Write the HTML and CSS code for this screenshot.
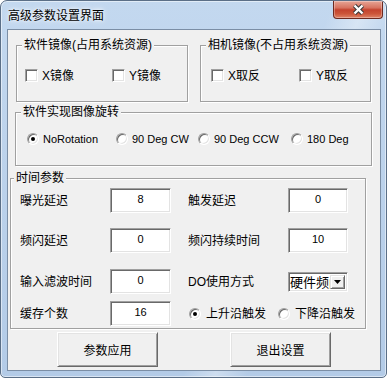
FILE: index.html
```html
<!DOCTYPE html>
<html lang="zh-CN">
<head>
    <meta charset="UTF-8">
    <meta name="viewport" content="width=device-width, initial-scale=1.0">
    <link rel="stylesheet" href="styles.css">
</head>
<body>
    <div class="window">
        <div class="titlebar">
            <span class="title">高级参数设置界面</span>
            <button class="close-btn" type="button">
                <svg width="13" height="11" viewBox="0 0 13 11">
                    <path d="M2.5 1.5 L10.5 9.5 M10.5 1.5 L2.5 9.5" stroke="#3a3a3a" stroke-width="4.4" fill="none"/>
                    <path d="M2.5 1.5 L10.5 9.5 M10.5 1.5 L2.5 9.5" stroke="#ffffff" stroke-width="2.4" fill="none"/>
                </svg>
            </button>
        </div>

        <div class="client">
            <!-- 镜像 -->
            <div class="mirror-row">
                <div class="group soft-mirror">
                    <div class="group-title">软件镜像(占用系统资源)</div>
                    <div class="check-row">
                        <label class="check w87"><span class="box"></span>X镜像</label>
                        <label class="check"><span class="box"></span>Y镜像</label>
                    </div>
                </div>
                <div class="group cam-mirror">
                    <div class="group-title">相机镜像(不占用系统资源)</div>
                    <div class="check-row cam">
                        <label class="check w88"><span class="box"></span>X取反</label>
                        <label class="check"><span class="box"></span>Y取反</label>
                    </div>
                </div>
            </div>

            <!-- 旋转 -->
            <div class="group rotate-group">
                <div class="group-title">软件实现图像旋转</div>
                <div class="radio-row">
                    <label class="radio w89"><span class="dot on"></span>NoRotation</label>
                    <label class="radio w82"><span class="dot"></span>90 Deg CW</label>
                    <label class="radio w93"><span class="dot"></span>90 Deg CCW</label>
                    <label class="radio"><span class="dot"></span>180 Deg</label>
                </div>
            </div>

            <!-- 时间参数 -->
            <div class="group time-group">
                <div class="group-title time-title">时间参数</div>
                <div class="time-row r1">
                    <span class="lbl">曝光延迟</span>
                    <input class="edit" type="text" value="8">
                    <span class="lbl2">触发延迟</span>
                    <input class="edit narrow" type="text" value="0">
                </div>
                <div class="time-row r2">
                    <span class="lbl">频闪延迟</span>
                    <input class="edit" type="text" value="0">
                    <span class="lbl2">频闪持续时间</span>
                    <input class="edit narrow" type="text" value="10">
                </div>
                <div class="time-row r3">
                    <span class="lbl">输入滤波时间</span>
                    <input class="edit" type="text" value="0">
                    <span class="lbl2">DO使用方式</span>
                    <div class="combo">
                        <span class="combo-text">硬件频闪</span>
                        <span class="combo-btn">
                            <svg width="7" height="4" viewBox="0 0 7 4"><path d="M0 0 H7 L3.5 4 Z" fill="#000"/></svg>
                        </span>
                    </div>
                </div>
                <div class="time-row r4">
                    <span class="lbl">缓存个数</span>
                    <input class="edit" type="text" value="16">
                    <div class="edge">
                        <label class="radio edge-item w89"><span class="dot on"></span>上升沿触发</label>
                        <label class="radio edge-item"><span class="dot"></span>下降沿触发</label>
                    </div>
                </div>
            </div>

            <div class="actions">
                <button class="btn" type="button">参数应用</button>
                <button class="btn" type="button">退出设置</button>
            </div>
        </div>
    </div>
</body>
</html>
```

FILE: styles.css
```css
body {
    margin: 0;
    font-family: "Liberation Sans", "Noto Sans CJK SC", sans-serif;
    font-size: 12px;
    color: #000;
}
.window {
    width: 387px;
    height: 378px;
    box-sizing: border-box;
    border: 1px solid #5b6f87;
    border-radius: 7px 7px 5px 5px;
    background:
        linear-gradient(112deg, transparent 62%, rgba(255, 255, 255, 0.35) 68%, transparent 74%),
        linear-gradient(to bottom, #c3d8ef, #b3cbe7);
    box-shadow: inset 0 0 0 1px rgba(255, 255, 255, 0.5);
    display: flex;
    flex-direction: column;
    overflow: hidden;
}
/* 标题栏 */
.titlebar {
    height: 28px;
    display: flex;
    justify-content: space-between;
    align-items: flex-start;
    padding-left: 7px;
}
.title {
    margin-top: 6px;
    line-height: 16px;
    font-family: "Noto Sans CJK SC", sans-serif;
    font-size: 12px;
    text-shadow: 0 0 6px rgba(255, 255, 255, 0.95), 0 0 3px rgba(255, 255, 255, 0.9);
}
.close-btn {
    width: 50px;
    height: 18px;
    margin-right: 3px;
    padding: 0;
    border: 1px solid #6e2a20;
    border-top: none;
    border-radius: 0 0 4px 4px;
    background: linear-gradient(to bottom, #e7a596 0%, #d77360 40%, #c4432e 52%, #cc5539 75%, #df8468 100%);
    box-shadow: inset 0 0 0 1px rgba(255, 255, 255, 0.3);
    display: flex;
    align-items: center;
    justify-content: center;
}
/* 客户区 */
.client {
    height: 342px;
    margin: 0 5px 0 6px;
    box-sizing: border-box;
    border: 1px solid #7b8ea5;
    background: #f0f0f0;
    display: flex;
    flex-direction: column;
    align-items: flex-start;
}
.group {
    box-sizing: border-box;
    border: 1px solid #a0a0a0;
    box-shadow: inset 1px 1px 0 #fff, 1px 1px 0 #fff;
}
.group-title {
    width: max-content;
    margin: -8px 0 0 5px;
    padding: 0 2px;
    line-height: 14px;
    background: #f0f0f0;
    font-size: 12px;
}
.mirror-row {
    display: flex;
    gap: 12px;
    margin: 15px 0 0 8px;
}
.soft-mirror {
    width: 172px;
    height: 57px;
}
.cam-mirror {
    width: 171px;
    height: 57px;
}
.check-row {
    display: flex;
    align-items: center;
    height: 13px;
    margin-top: 17px;
    padding-left: 8px;
}
.check-row.cam {
    padding-left: 10px;
}
.check {
    display: flex;
    align-items: center;
    gap: 4px;
    line-height: 14px;
}
.box {
    width: 13px;
    height: 13px;
    box-sizing: border-box;
    background: #fff;
    border: 1px solid;
    border-color: #a0a0a0 #fff #fff #a0a0a0;
    box-shadow: inset 1px 1px 0 #696969, inset -1px -1px 0 #e3e3e3;
}
.w82 { width: 82px; }
.w87 { width: 87px; }
.w88 { width: 88px; }
.w89 { width: 89px; }
.w93 { width: 93px; }

/* 旋转 */
.rotate-group {
    width: 357px;
    height: 54px;
    margin: 10px 0 0 7px;
}
.radio-row {
    display: flex;
    align-items: center;
    height: 12px;
    margin-top: 14px;
    padding-left: 11px;
}
.radio {
    display: flex;
    align-items: center;
    gap: 4px;
    font-size: 11px;
    line-height: 14px;
}
.dot {
    position: relative;
    width: 12px;
    height: 12px;
    flex: none;
    box-sizing: border-box;
    border-radius: 50%;
    background: #fff;
    border: 1px solid;
    border-color: #a0a0a0 #fff #fff #a0a0a0;
    box-shadow: inset 1px 1px 0 #696969, inset -1px -1px 0 #e3e3e3;
}
.dot.on::after {
    content: "";
    position: absolute;
    left: 3px;
    top: 3px;
    width: 4px;
    height: 4px;
    border-radius: 50%;
    background: #000;
}

/* 时间参数 */
.time-group {
    width: 356px;
    height: 151px;
    margin: 12px 0 0 2px;
}
.time-title {
    margin-left: 3px;
}
.time-row {
    display: flex;
    align-items: center;
    height: 25px;
    padding-left: 9px;
}
.r1 { margin-top: 3px; }
.r2 { margin-top: 15px; }
.r3 { margin-top: 16px; }
.r4 { margin-top: 7px; }
.lbl {
    width: 90px;
    line-height: 16px;
}
.lbl2 {
    width: 100px;
    padding-left: 17px;
    line-height: 16px;
}
.edit {
    width: 61px;
    height: 25px;
    margin: 0;
    padding: 0 0 4px 0;
    box-sizing: border-box;
    border: 1px solid;
    border-color: #a0a0a0 #fff #fff #a0a0a0;
    box-shadow: inset 1px 1px 0 #696969, inset -1px -1px 0 #e3e3e3;
    background: #fff;
    text-align: center;
    font-family: "Liberation Sans", sans-serif;
    font-size: 11px;
    color: #000;
    outline: none;
}
.edit.narrow {
    width: 60px;
}
.combo {
    width: 60px;
    height: 20px;
    box-sizing: border-box;
    padding: 2px;
    background: #fff;
    border: 1px solid;
    border-color: #a0a0a0 #fff #fff #a0a0a0;
    box-shadow: inset 1px 1px 0 #696969, inset -1px -1px 0 #e3e3e3;
    display: flex;
    align-items: stretch;
}
.combo-text {
    flex: 1;
    overflow: hidden;
    white-space: nowrap;
    margin-left: -1px;
    font-size: 13px;
    line-height: 16px;
}
.combo-btn {
    width: 15px;
    flex: none;
    box-sizing: border-box;
    background: #f0f0f0;
    border: 1px solid;
    border-color: #e3e3e3 #696969 #696969 #e3e3e3;
    box-shadow: inset 1px 1px 0 #fff, inset -1px -1px 0 #a0a0a0;
    display: flex;
    align-items: center;
    justify-content: center;
}
.edge {
    display: flex;
    align-items: center;
    padding-left: 18px;
}
.edge-item {
    gap: 5px;
    font-size: 12px;
}

/* 按钮 */
.actions {
    display: flex;
    gap: 72px;
    margin: 3px 0 0 49px;
}
.btn {
    width: 101px;
    height: 35px;
    padding: 0;
    box-sizing: border-box;
    background: #f0f0f0;
    border: 1px solid;
    border-color: #fff #696969 #696969 #fff;
    box-shadow: inset 1px 1px 0 #e3e3e3, inset -1px -1px 0 #a0a0a0;
    font-family: "Liberation Sans", "Noto Sans CJK SC", sans-serif;
    font-size: 12px;
    color: #000;
}
```
